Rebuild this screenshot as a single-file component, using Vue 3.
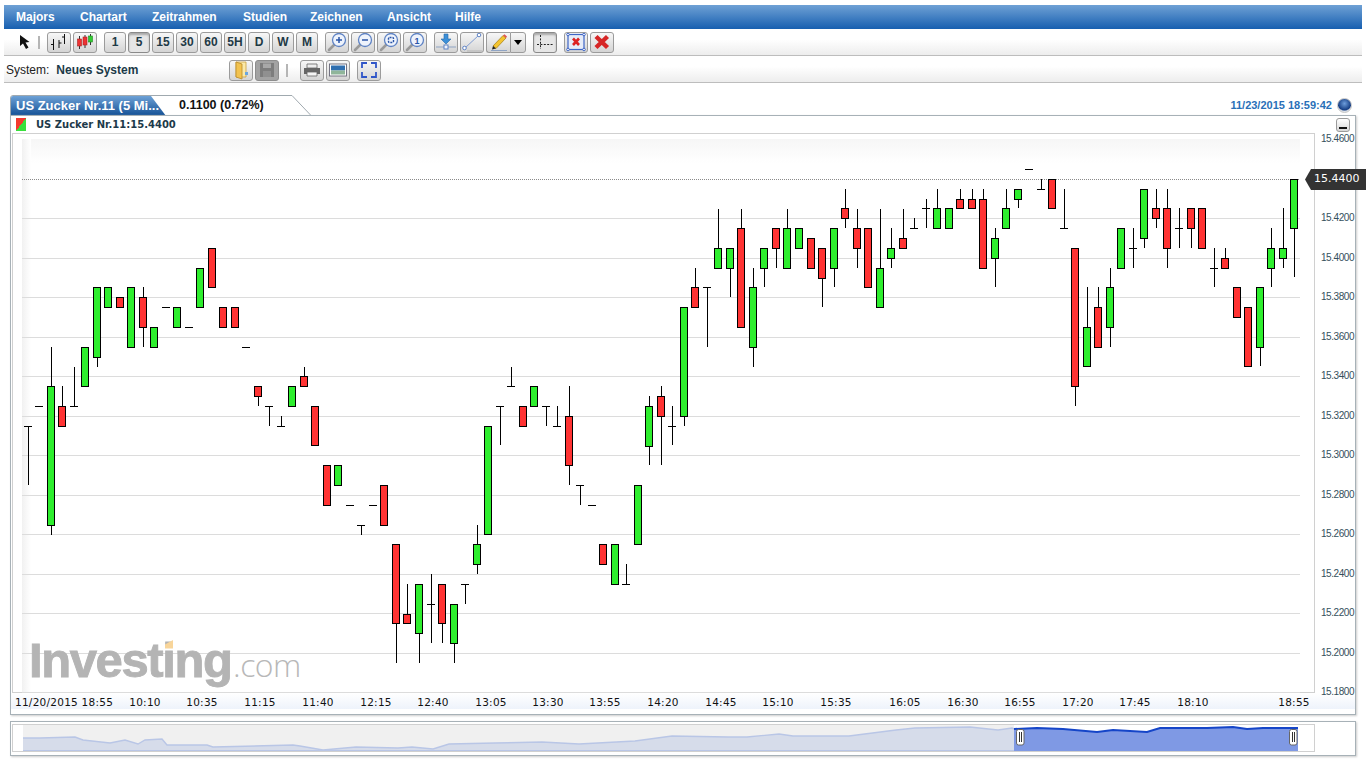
<script setup>
const menus = ['Majors', 'Chartart', 'Zeitrahmen', 'Studien', 'Zeichnen', 'Ansicht', 'Hilfe']
const frames = ['1', '5', '15', '30', '60', '5H', 'D', 'W', 'M']
const zooms = ['in', 'out', 'fit', 'one']
const lastPrice = '15.4400'

// candle rows in page pixels: kind, top, bottom, high, low
const rows = [
  ['d', 426, 426, 426, 485], ['d', 406, 406], ['g', 386, 525, 347, 535], ['r', 406, 426, 386, 426],
  ['d', 406, 406, 367, 406], ['g', 347, 386], ['g', 287, 357, 287, 367], ['g', 287, 307],
  ['r', 297, 307], ['g', 287, 347], ['r', 297, 327, 287, 347], ['g', 327, 347],
  ['d', 307, 307], ['g', 307, 327], ['d', 327, 327], ['g', 268, 307],
  ['r', 248, 287], ['r', 307, 327], ['r', 307, 327], ['d', 347, 347],
  ['r', 386, 396, 386, 406], ['d', 406, 406, 406, 426], ['d', 426, 426, 416, 426], ['g', 386, 406],
  ['r', 376, 386, 367, 386], ['r', 406, 445], ['r', 465, 505], ['g', 465, 485],
  ['d', 505, 505], ['d', 525, 525, 525, 535], ['d', 505, 505], ['r', 485, 525],
  ['r', 544, 623, 544, 663], ['r', 614, 623, 584, 623], ['g', 584, 633, 584, 663], ['d', 604, 604, 574, 643],
  ['r', 584, 623, 584, 643], ['g', 604, 643, 604, 663], ['d', 584, 584, 584, 604], ['g', 544, 564, 525, 574],
  ['g', 426, 534], ['d', 406, 406, 406, 445], ['d', 386, 386, 367, 386], ['r', 406, 426],
  ['g', 386, 406], ['d', 406, 406, 406, 426], ['d', 426, 426, 406, 426], ['r', 416, 465, 386, 485],
  ['d', 485, 485, 485, 505], ['d', 505, 505], ['r', 544, 564], ['g', 544, 584],
  ['d', 584, 584, 564, 584], ['g', 485, 544], ['g', 406, 446, 396, 465], ['r', 396, 416, 386, 465],
  ['d', 426, 426, 406, 445], ['g', 307, 416, 307, 426], ['r', 287, 307, 268, 307], ['d', 287, 287, 287, 347],
  ['g', 248, 268, 209, 268], ['g', 248, 268, 248, 297], ['r', 228, 327, 209, 327], ['g', 287, 347, 268, 367],
  ['g', 248, 268, 248, 287], ['r', 228, 248, 228, 268], ['g', 228, 268, 209, 268], ['g', 228, 248],
  ['r', 238, 268], ['r', 248, 278, 248, 307], ['g', 228, 268, 228, 287], ['r', 208, 218, 189, 228],
  ['r', 228, 248, 209, 268], ['r', 228, 287], ['g', 268, 307, 209, 307], ['g', 248, 258, 228, 268],
  ['r', 238, 248, 209, 248], ['d', 228, 228, 218, 228], ['d', 208, 208, 199, 228], ['g', 208, 228, 189, 228],
  ['g', 208, 228], ['r', 199, 208, 189, 208], ['r', 199, 208, 189, 208], ['r', 199, 268, 189, 268],
  ['g', 238, 258, 228, 287], ['g', 208, 228, 189, 228], ['g', 189, 199, 189, 208], ['d', 169, 169],
  ['d', 189, 189, 179, 189], ['r', 179, 208], ['d', 228, 228, 189, 228], ['r', 248, 386, 248, 406],
  ['g', 327, 366, 287, 366], ['r', 307, 347, 287, 347], ['g', 287, 327, 268, 347], ['g', 228, 268],
  ['d', 248, 248, 228, 268], ['g', 189, 238, 189, 248], ['r', 208, 218, 189, 228], ['r', 208, 248, 189, 268],
  ['d', 228, 228, 208, 248], ['r', 208, 228, 208, 248], ['r', 208, 248], ['d', 268, 268, 248, 287],
  ['r', 258, 268, 248, 268], ['r', 287, 317], ['r', 307, 366], ['g', 287, 347, 287, 366],
  ['g', 248, 268, 228, 287], ['g', 248, 258, 208, 268], ['g', 179, 228, 179, 277]
]

const candles = rows.map((r, i) => ({
  kind: r[0],
  x: Math.round(27.5 + 11.515 * i),
  top: r[1],
  bottom: r[2],
  high: r[3] ?? r[1],
  low: r[4] ?? r[2]
}))

const gridY = []
for (let i = 2; i < 15; i++) gridY.push(Math.round(139 + 39.5 * i) + 0.5)

const prices = []
for (let p = 4600; p >= 1800; p -= 200) prices.push('15.' + p)

const times = [
  [145, '10:10'], [202, '10:35'], [260, '11:15'], [318, '11:40'], [376, '12:15'], [433, '12:40'],
  [491, '13:05'], [548, '13:30'], [605, '13:55'], [663, '14:20'], [721, '14:45'], [778, '15:10'],
  [836, '15:35'], [905, '16:05'], [963, '16:30'], [1020, '16:55'], [1078, '17:20'], [1135, '17:45'],
  [1193, '18:10'], [1294, '18:55']
]

const past = '23,737 40,737 75,736 83,739 110,742 125,739 138,743 145,739 162,738 167,744 207,744 213,746 293,744 300,745 323,749 356,746 398,747 412,746 433,748 449,743 495,742 542,741 579,743 635,740 672,735 728,736 747,736 779,733 793,735 849,735 896,729 915,727 970,726 998,729 1012,727 1014,728'
const recent = '1014,728 1037,727 1063,728 1097,731 1113,729 1147,731 1160,727 1207,727 1233,726 1247,728 1263,727 1298,727'
</script>

<template>
  <div class="page">
    <nav class="menu">
      <span v-for="m in menus" :key="m">{{ m }}</span>
    </nav>

    <div class="toolbar">
      <svg class="pointer" width="12" height="16" viewBox="0 0 12 16">
        <path d="M1 1 L1 12 L4 9.5 L7 15 L9.5 13.5 L6.5 8.5 L10.5 8 Z" fill="#111" />
      </svg>
      <i class="sep"></i>
      <div class="group">
        <button class="btn">
          <svg width="20" height="18" viewBox="0 0 20 18">
            <path d="M4.5 6V17M2 11.5H4.5M10 7V15M10 10H12.5M15.5 1V11M13 4H15.5" stroke="#111" fill="none" />
          </svg>
        </button>
        <button class="btn">
          <svg width="20" height="18" viewBox="0 0 20 18">
            <path d="M4.5 3V16M10 2V15M15.5 1V12" stroke="#333" fill="none" />
            <rect x="2.5" y="6" width="4" height="7" fill="#e33" stroke="#a22" stroke-width=".6" />
            <rect x="8" y="4" width="4" height="8" fill="#e33" stroke="#a22" stroke-width=".6" />
            <rect x="13.5" y="3" width="4" height="6" fill="#3c3" stroke="#282" stroke-width=".6" />
          </svg>
        </button>
      </div>
      <div class="group">
        <button v-for="f in frames" :key="f" class="btn frame" :class="{ pressed: f === '5' }">{{ f }}</button>
      </div>
      <div class="group">
        <button v-for="z in zooms" :key="z" class="btn">
          <svg width="22" height="20" viewBox="0 0 22 20">
            <path d="M8.5 12.5L3 18" stroke="#9a9a9a" stroke-width="2.6" stroke-linecap="round" />
            <circle cx="13" cy="8" r="6.5" fill="#eef3fc" stroke="#5f83c4" stroke-width="1.3" />
            <path v-if="z === 'in'" d="M10 8H16M13 5V11" stroke="#2a55a8" stroke-width="1.5" />
            <path v-if="z === 'out'" d="M10 8H16" stroke="#2a55a8" stroke-width="1.5" />
            <rect v-if="z === 'fit'" x="10.5" y="5.5" width="5" height="5" rx="1" fill="none" stroke="#2a55a8" stroke-width="1.4" stroke-dasharray="2 1" />
            <text v-if="z === 'one'" x="13" y="11.5" text-anchor="middle" class="mag-one">1</text>
          </svg>
        </button>
      </div>
      <div class="group">
        <button class="btn">
          <svg width="22" height="20" viewBox="0 0 22 20">
            <path d="M9 2H13V7H16L11 12L6 7H9Z" fill="#3b8fd8" stroke="#256aa8" stroke-width=".6" />
            <path d="M1 15H21" stroke="#8fa4c4" />
            <rect x="9" y="13" width="4" height="4" fill="#eef3fc" stroke="#5f83c4" />
          </svg>
        </button>
        <button class="btn">
          <svg width="22" height="20" viewBox="0 0 22 20">
            <path d="M4 16L18 3" stroke="#7f9bd0" />
            <circle cx="3.5" cy="16" r="1.8" fill="#fff" stroke="#5f83c4" />
            <circle cx="18" cy="3" r="1.8" fill="#fff" stroke="#5f83c4" />
            <path d="M6 19H21" stroke="#b5b5b5" />
          </svg>
        </button>
        <div class="split">
          <button class="btn part">
            <svg width="20" height="20" viewBox="0 0 20 20">
              <path d="M4 14L14 3.5L17 6L7 16.5Z" fill="#f4c430" stroke="#a07a10" stroke-width=".7" />
              <path d="M14 3.5L17 6L18 4.5L15.5 2.2Z" fill="#e05555" />
              <path d="M4 14L7 16.5L3 17.5Z" fill="#222" />
              <path d="M2 18.5H18" stroke="#8fa4c4" />
            </svg>
          </button>
          <button class="btn part drop"><i class="caret"></i></button>
        </div>
      </div>
      <div class="group">
        <button class="btn pressed">
          <svg width="20" height="20" viewBox="0 0 20 20">
            <path d="M5.5 3V17M2 12.5H18" stroke="#222" stroke-dasharray="2 1.4" fill="none" />
          </svg>
        </button>
      </div>
      <div class="group">
        <button class="btn">
          <svg width="22" height="20" viewBox="0 0 22 20">
            <rect x="3" y="2.5" width="16" height="15" fill="#e6ecf8" stroke="#3f66c6" stroke-width="1.2" />
            <path d="M8 6.5L14 13M14 6.5L8 13" stroke="#d22" stroke-width="2.6" />
            <g fill="#fff" stroke="#3f66c6">
              <circle cx="3" cy="2.5" r="1.3" />
              <circle cx="19" cy="2.5" r="1.3" />
              <circle cx="3" cy="17.5" r="1.3" />
              <circle cx="19" cy="17.5" r="1.3" />
            </g>
          </svg>
        </button>
        <button class="btn">
          <svg width="20" height="20" viewBox="0 0 20 20">
            <path d="M4 4.5L15.5 15.5M15.5 4.5L4 15.5" stroke="#d62626" stroke-width="4.4" />
          </svg>
        </button>
      </div>
    </div>

    <div class="toolbar second">
      <div class="system">System:<b>Neues System</b></div>
      <div class="group">
        <button class="btn">
          <svg width="20" height="20" viewBox="0 0 20 20">
            <path d="M5 2H15V17H5Z" fill="#fbe9a8" stroke="#c9a040" stroke-width=".8" />
            <path d="M5 2L11 4V19L5 17Z" fill="#f2c24e" stroke="#b88a2a" stroke-width=".8" />
            <path d="M14 12H17V15H14Z" fill="#6aa6e0" />
          </svg>
        </button>
        <button class="btn disabled">
          <svg width="20" height="20" viewBox="0 0 20 20">
            <path d="M3 3H17V17H3Z" fill="#7d7d7d" />
            <path d="M6 3.5H14V8H6Z" fill="#a8a8a8" />
            <path d="M6 11H14V17H6Z" fill="#909090" />
          </svg>
        </button>
      </div>
      <i class="sep"></i>
      <div class="group wide">
        <button class="btn">
          <svg width="20" height="20" viewBox="0 0 20 20">
            <path d="M5 4H15V8H5Z" fill="#eee" stroke="#666" stroke-width=".8" />
            <path d="M2 8H18V14H2Z" fill="#666" />
            <path d="M5 12H15V16H5Z" fill="#f4f4f4" stroke="#666" stroke-width=".8" />
          </svg>
        </button>
        <button class="btn">
          <svg width="20" height="20" viewBox="0 0 20 20">
            <rect x="1.5" y="4" width="17" height="12" fill="#fff" stroke="#667" stroke-width=".9" />
            <rect x="3" y="5.5" width="14" height="5" fill="#2f6fb0" />
            <rect x="3" y="10.5" width="14" height="4" fill="#8fb59a" />
          </svg>
        </button>
      </div>
      <button class="btn full">
        <svg width="20" height="20" viewBox="0 0 20 20">
          <path d="M3 8V3H8M12 3H17V8M17 12V17H12M8 17H3V12" fill="none" stroke="#2f55c8" stroke-width="1.8" />
        </svg>
      </button>
    </div>

    <div class="tabs">
      <div class="tab">
        <svg class="tab-shape" width="302" height="21" viewBox="0 0 302 21">
          <defs>
            <linearGradient id="tabBlue" x1="0" y1="0" x2="0" y2="1">
              <stop offset="0" stop-color="#6da1d6" />
              <stop offset="1" stop-color="#134f94" />
            </linearGradient>
          </defs>
          <path d="M.5 21V3Q.5 .5 3 .5H282L301 20.5" fill="#fff" stroke="#a0a9af" />
          <path d="M1 21V3Q1 1 3 1H141L156 21Z" fill="url(#tabBlue)" />
        </svg>
        <span class="tab-name">US Zucker Nr.11 (5 Mi...</span>
        <span class="tab-change">0.1100 (0.72%)</span>
      </div>
      <div class="clock">
        <span>11/23/2015 18:59:42</span>
        <i class="globe"></i>
      </div>
    </div>

    <section class="panel">
      <div class="legend">
        <i class="swatch"></i>
        <b>US Zucker Nr.11:15.4400</b>
        <button class="minimize"></button>
      </div>

      <div class="plot-row">
        <svg class="plot" width="1303" height="560" viewBox="12 133 1303 560">
          <defs>
            <linearGradient id="fadeTop" x1="0" y1="0" x2="0" y2="1">
              <stop offset="0" stop-color="#f6f6f6" />
              <stop offset="1" stop-color="#fff" />
            </linearGradient>
            <linearGradient id="fadeIn" x1="0" y1="0" x2="1" y2="0">
              <stop offset="0" stop-color="#f1f1f1" />
              <stop offset="1" stop-color="#fff" />
            </linearGradient>
          </defs>
          <rect x="12.5" y="133.5" width="1302" height="559" fill="#fff" stroke="#d0d0d0" />
          <rect x="22" y="139" width="1278" height="24" fill="url(#fadeTop)" />
          <rect x="22" y="139" width="9" height="553" fill="url(#fadeIn)" />
          <line v-for="y in gridY" :key="y" x1="22" x2="1300" :y1="y" :y2="y" stroke="#dcdcdc" />
          <line x1="22" x2="1300" y1="179.5" y2="179.5" stroke="#8a8a8a" stroke-dasharray="1 1" />

          <g class="logo">
            <text x="29" y="677" class="logo-main">Investing</text>
            <path d="M165 644.5L173 640V648.5H165Z" fill="#f8d59a" />
            <text x="233" y="677" class="logo-dom">.com</text>
          </g>

          <g v-for="c in candles" :key="c.x">
            <line v-if="c.high !== c.low" :x1="c.x + 0.5" :x2="c.x + 0.5" :y1="c.high" :y2="c.low" stroke="#000" />
            <line v-if="c.kind === 'd'" :x1="c.x - 4" :x2="c.x + 4" :y1="c.top + 0.5" :y2="c.top + 0.5" stroke="#000" />
            <rect
              v-else
              :x="c.x - 3.5"
              :y="c.top + 0.5"
              width="7"
              :height="c.bottom - c.top"
              :fill="c.kind === 'g' ? '#2eee2e' : '#ff3333'"
              stroke="#000"
            />
          </g>
        </svg>
        <div class="prices">
          <span v-for="p in prices" :key="p">{{ p === lastPrice ? '' : p }}</span>
        </div>
        <div class="last-price">{{ lastPrice }}</div>
      </div>

      <svg class="time-axis" width="1344" height="16" viewBox="11 693 1344 16">
        <text x="15" y="706" class="tick">11/20/2015 18:55</text>
        <text v-for="t in times" :key="t[0]" :x="t[0]" y="706" class="tick" text-anchor="middle">{{ t[1] }}</text>
      </svg>
    </section>

    <section class="navigator">
      <svg width="1303" height="28" viewBox="12 723 1303 28">
        <rect x="12.5" y="723.5" width="1302" height="27" fill="#fff" stroke="#d0d0d0" />
        <rect x="23" y="724" width="1275" height="26" fill="#f0f0f0" />
        <rect x="1014" y="724" width="284" height="26" fill="#fff" />
        <polygon :points="past + ' 1014,750 23,750'" fill="#d6dcea" />
        <polyline :points="past" fill="none" stroke="#b9c6e6" stroke-width="1.4" />
        <path d="M23 749.5H1014" stroke="#b9c6e6" />
        <polygon :points="recent + ' 1298,750 1014,750'" fill="#7f99e4" />
        <polyline :points="recent" fill="none" stroke="#1545c8" stroke-width="2" />
        <g v-for="x in [1020, 1293]" :key="x">
          <rect :x="x - 3.5" y="728.5" width="7.5" height="15.5" rx="2" fill="#fff" stroke="#666" />
          <path :d="`M${x - 0.5} 731V741M${x + 1.5} 731V741`" stroke="#333" />
        </g>
      </svg>
    </section>
  </div>
</template>

<style scoped>
.page {
  width: 1366px;
  height: 768px;
  overflow: hidden;
  position: relative;
  background: #fff;
  font-family: "Liberation Sans", Arial, sans-serif;
}
.menu {
  display: grid;
  grid-template-columns: 64px 72px 91px 67px 77px 68px 1fr;
  align-items: center;
  margin: 5px 4px 0;
  padding-left: 12px;
  height: 24px;
  background: linear-gradient(#6fa1d5, #175fb0);
  color: #fff;
  font-size: 12px;
  font-weight: bold;
}
.toolbar {
  display: flex;
  align-items: center;
  gap: 7px;
  margin: 0 4px;
  padding-left: 15px;
  height: 27px;
  border-bottom: 1px solid #bdbdbd;
  background: linear-gradient(#fff 40%, #ededed);
  box-sizing: border-box;
}
.toolbar.second {
  padding: 2px 0 0 2px;
}
.sep {
  height: 13px;
  width: 0;
  border-left: 1px solid #b5b5b5;
  border-right: 1px solid #b5b5b5;
}
.group {
  display: flex;
  gap: 2px;
}
.group.wide {
  margin-left: 5px;
}
.btn {
  display: flex;
  align-items: center;
  justify-content: center;
  width: 24px;
  height: 21px;
  padding: 0;
  border: 1px solid #9b9b9b;
  border-radius: 3px;
  background: linear-gradient(#f7f7f7, #d4d4d4);
  box-sizing: border-box;
  overflow: hidden;
}
.frame {
  width: 22px;
  color: #1f3a46;
  font-family: "Liberation Sans", Arial, sans-serif;
  font-size: 12px;
  font-weight: bold;
}
.pressed {
  border-color: #8a8a8a;
  background: #e6e6e6;
  box-shadow: inset 0 2px 2px #aaa;
}
.disabled {
  background: #a3a3a3;
  border-color: #8d8d8d;
}
.split {
  display: flex;
}
.part {
  border-radius: 3px 0 0 3px;
  border-right: 0;
}
.drop {
  width: 16px;
  border-radius: 0 3px 3px 0;
  border-left: 1px solid #9b9b9b;
  border-right: 1px solid #9b9b9b;
}
.caret {
  width: 0;
  height: 0;
  border-left: 4px solid transparent;
  border-right: 4px solid transparent;
  border-top: 5px solid #000;
}
.mag-one {
  font-family: "Liberation Sans", Arial, sans-serif;
  font-size: 9px;
  font-weight: bold;
  fill: #2a55a8;
}
.system {
  width: 216px;
  font-size: 12px;
  color: #222;
}
.system b {
  margin-left: 7px;
  color: #1c3a48;
}
.tabs {
  display: flex;
  justify-content: space-between;
  align-items: flex-end;
  margin: 12px 10px 0;
  height: 20px;
}
.tab {
  position: relative;
  display: flex;
  align-items: center;
  width: 302px;
  height: 20px;
  font-size: 13px;
  font-weight: bold;
}
.tab-shape {
  position: absolute;
  left: 0;
  top: 0;
}
.tab-name {
  position: relative;
  width: 169px;
  padding-left: 6px;
  box-sizing: border-box;
  color: #fff;
  white-space: nowrap;
}
.tab-change {
  position: relative;
  color: #111;
  font-size: 12.5px;
}
.clock {
  display: flex;
  align-items: center;
  gap: 5px;
  height: 20px;
  margin-right: 4px;
  font-size: 11px;
  font-weight: bold;
  color: #2a70b8;
}
.globe {
  width: 15px;
  height: 15px;
  border-radius: 50%;
  background: radial-gradient(circle at 50% 35%, #6d9ddb, #163f85 60%, #dfe3e8 72%);
  border: 1px solid #c4c4c4;
  box-sizing: border-box;
}
.panel {
  position: relative;
  width: 1346px;
  height: 600px;
  margin-left: 10px;
  border: 1px solid #a7b1b7;
  box-sizing: border-box;
  box-shadow: 1px 1px 2px #ccc;
}
.legend {
  display: flex;
  align-items: center;
  height: 17px;
  padding-left: 5px;
  font-family: "DejaVu Sans", Verdana, sans-serif;
  font-size: 10px;
  color: #1d3a4a;
}
.legend b {
  margin-left: 10px;
}
.swatch {
  width: 10px;
  height: 13px;
  background: linear-gradient(to bottom right, #f23a2e 50%, #37e03c 50%);
}
.minimize {
  margin-left: auto;
  margin-right: 5px;
  width: 14px;
  height: 14px;
  padding: 0;
  border: 1px solid #9b9b9b;
  border-radius: 3px;
  background: linear-gradient(#fff, #d8d8d8);
  position: relative;
}
.minimize::after {
  content: "";
  position: absolute;
  left: 2px;
  right: 2px;
  bottom: 2px;
  height: 2px;
  background: #111;
}
.plot-row {
  display: flex;
  margin-left: 1px;
  height: 560px;
}
.plot {
  display: block;
  flex: none;
}
.prices {
  position: relative;
  z-index: 1;
  display: flex;
  flex-direction: column;
  flex: none;
  margin-left: 6px;
  font-size: 10px;
  letter-spacing: -.45px;
  color: #34505c;
}
.prices span {
  flex: none;
  height: 39.5px;
  line-height: 12px;
}
.last-price {
  position: absolute;
  right: -11px;
  top: 53px;
  width: 61px;
  height: 21px;
  line-height: 20px;
  padding-left: 9px;
  box-sizing: border-box;
  background: #333;
  color: #fff;
  font-family: "DejaVu Sans", Verdana, sans-serif;
  font-size: 11px;
  clip-path: polygon(0 50%, 6px 0, 100% 0, 100% 100%, 6px 100%);
}
.time-axis {
  display: block;
  background: linear-gradient(#fff, #eef3fb);
}
.tick {
  font-family: "DejaVu Sans", Verdana, sans-serif;
  font-size: 10.5px;
  letter-spacing: .25px;
  fill: #111;
}
.logo-main {
  font-family: "Liberation Sans", Arial, sans-serif;
  font-size: 49px;
  font-weight: bold;
  letter-spacing: -1.4px;
  fill: #b4b4b4;
  stroke: #b4b4b4;
  stroke-width: .9px;
}
.logo-dom {
  font-family: "Open Sans", "Liberation Sans", sans-serif;
  font-size: 32px;
  font-weight: 300;
  letter-spacing: -.5px;
  fill: #b8b8b8;
}
.navigator {
  width: 1346px;
  height: 35px;
  margin: 6px 0 0 10px;
  padding: 2px 0 0 1px;
  border: 1px solid #a7b1b7;
  box-sizing: border-box;
  box-shadow: 1px 1px 2px #ccc;
}
.navigator svg {
  display: block;
}
</style>
